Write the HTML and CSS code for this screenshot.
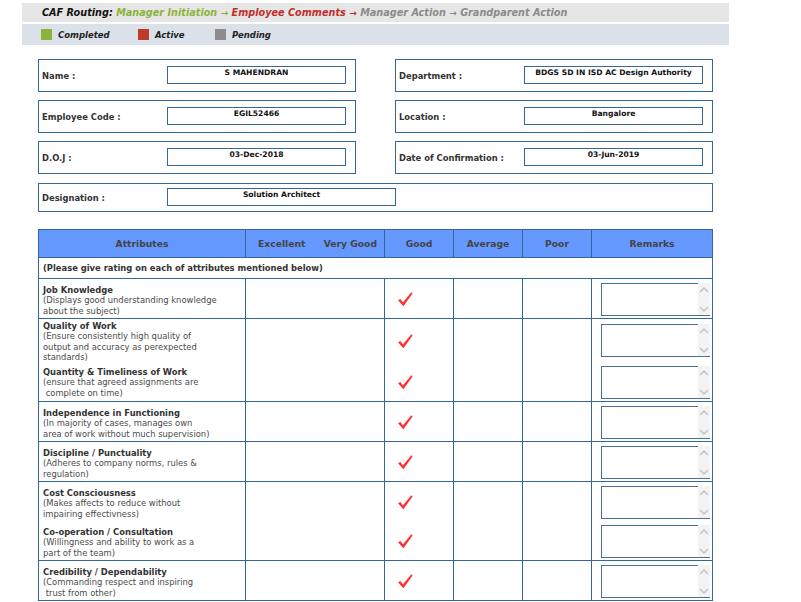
FILE: index.html
```html
<!DOCTYPE html>
<html>
<head>
<meta charset="utf-8">
<link rel="stylesheet" href="styles.css">
</head>
<body>
<div class="page">
  <div class="routing">
    <span class="caf">CAF Routing:</span>
    <span class="done">Manager Initiation <span class="arr">&#8594;</span></span>
    <span class="active">Employee Comments <span class="arr">&#8594;</span></span>
    <span class="pend">Manager Action <span class="arr">&#8594;</span></span>
    <span class="pend">Grandparent Action</span>
  </div>
  <div class="legend">
    <span class="sw sw-green"></span><span class="lg">Completed</span>
    <span class="sw sw-red"></span><span class="lg">Active</span>
    <span class="sw sw-grey"></span><span class="lg">Pending</span>
  </div>

  <div class="info">
    <div class="field"><span class="label">Name :</span><span class="value">S MAHENDRAN</span></div>
    <div class="field"><span class="label">Department :</span><span class="value">BDGS SD IN ISD AC Design Authority</span></div>
    <div class="field"><span class="label">Employee Code :</span><span class="value">EGIL52466</span></div>
    <div class="field"><span class="label">Location :</span><span class="value">Bangalore</span></div>
    <div class="field"><span class="label">D.O.J :</span><span class="value">03-Dec-2018</span></div>
    <div class="field"><span class="label">Date of Confirmation :</span><span class="value">03-Jun-2019</span></div>
    <div class="field wide"><span class="label">Designation :</span><span class="value">Solution Architect</span></div>
  </div>

  <table class="rating">
    <colgroup>
      <col class="c-attr"><col class="c-ev"><col class="c-r"><col class="c-r"><col class="c-r"><col class="c-rem">
    </colgroup>
    <thead>
      <tr>
        <th>Attributes</th>
        <th><div class="ev"><span>Excellent</span><span>Very Good</span></div></th>
        <th>Good</th>
        <th>Average</th>
        <th>Poor</th>
        <th>Remarks</th>
      </tr>
    </thead>
    <tbody>
      <tr><td colspan="6" class="note">(Please give rating on each of attributes mentioned below)</td></tr>

      <tr>
        <td><div class="attr"><b>Job Knowledge</b><span>(Displays good understanding knowledge</span><span>about the subject)</span></div></td>
        <td></td>
        <td><div class="slot"><svg class="tick" viewBox="0 0 16 16"><path d="M1,9.3 L3.3,7.9 L6,11.2 L14.3,1.2 L15.6,2.4 L6.4,15.3 Z"/></svg></div></td>
        <td></td><td></td>
        <td><div class="slot rem"><div class="remark"><textarea></textarea><div class="sb"><svg viewBox="0 0 10 6"><path d="M1 5 L5 1 L9 5"/></svg><svg viewBox="0 0 10 6"><path d="M1 1 L5 5 L9 1"/></svg></div></div></div></td>
      </tr>

      <tr>
        <td>
          <div class="attr first4"><b>Quality of Work</b><span>(Ensure consistently high quality of</span><span>output and accuracy as perexpected</span><span>standards)</span></div>
          <div class="attr second"><b>Quantity &amp; Timeliness of Work</b><span>(ensure that agreed assignments are</span><span>&nbsp;complete on time)</span></div>
        </td>
        <td></td>
        <td>
          <div class="slot tall"><svg class="tick" viewBox="0 0 16 16"><path d="M1,9.3 L3.3,7.9 L6,11.2 L14.3,1.2 L15.6,2.4 L6.4,15.3 Z"/></svg></div>
          <div class="slot"><svg class="tick" viewBox="0 0 16 16"><path d="M1,9.3 L3.3,7.9 L6,11.2 L14.3,1.2 L15.6,2.4 L6.4,15.3 Z"/></svg></div>
        </td>
        <td></td><td></td>
        <td>
          <div class="slot rem tall"><div class="remark"><textarea></textarea><div class="sb"><svg viewBox="0 0 10 6"><path d="M1 5 L5 1 L9 5"/></svg><svg viewBox="0 0 10 6"><path d="M1 1 L5 5 L9 1"/></svg></div></div></div>
          <div class="slot rem"><div class="remark"><textarea></textarea><div class="sb"><svg viewBox="0 0 10 6"><path d="M1 5 L5 1 L9 5"/></svg><svg viewBox="0 0 10 6"><path d="M1 1 L5 5 L9 1"/></svg></div></div></div>
        </td>
      </tr>

      <tr>
        <td><div class="attr"><b>Independence in Functioning</b><span>(In majority of cases, manages own</span><span>area of work without much supervision)</span></div></td>
        <td></td>
        <td><div class="slot"><svg class="tick" viewBox="0 0 16 16"><path d="M1,9.3 L3.3,7.9 L6,11.2 L14.3,1.2 L15.6,2.4 L6.4,15.3 Z"/></svg></div></td>
        <td></td><td></td>
        <td><div class="slot rem"><div class="remark"><textarea></textarea><div class="sb"><svg viewBox="0 0 10 6"><path d="M1 5 L5 1 L9 5"/></svg><svg viewBox="0 0 10 6"><path d="M1 1 L5 5 L9 1"/></svg></div></div></div></td>
      </tr>

      <tr>
        <td><div class="attr"><b>Discipline / Punctuality</b><span>(Adheres to company norms, rules &amp;</span><span>regulation)</span></div></td>
        <td></td>
        <td><div class="slot"><svg class="tick" viewBox="0 0 16 16"><path d="M1,9.3 L3.3,7.9 L6,11.2 L14.3,1.2 L15.6,2.4 L6.4,15.3 Z"/></svg></div></td>
        <td></td><td></td>
        <td><div class="slot rem"><div class="remark"><textarea></textarea><div class="sb"><svg viewBox="0 0 10 6"><path d="M1 5 L5 1 L9 5"/></svg><svg viewBox="0 0 10 6"><path d="M1 1 L5 5 L9 1"/></svg></div></div></div></td>
      </tr>

      <tr>
        <td>
          <div class="attr"><b>Cost Consciousness</b><span>(Makes affects to reduce without</span><span>impairing effectivness)</span></div>
          <div class="attr"><b>Co-operation / Consultation</b><span>(Willingness and ability to work as a</span><span>part of the team)</span></div>
        </td>
        <td></td>
        <td>
          <div class="slot"><svg class="tick" viewBox="0 0 16 16"><path d="M1,9.3 L3.3,7.9 L6,11.2 L14.3,1.2 L15.6,2.4 L6.4,15.3 Z"/></svg></div>
          <div class="slot"><svg class="tick" viewBox="0 0 16 16"><path d="M1,9.3 L3.3,7.9 L6,11.2 L14.3,1.2 L15.6,2.4 L6.4,15.3 Z"/></svg></div>
        </td>
        <td></td><td></td>
        <td>
          <div class="slot rem"><div class="remark"><textarea></textarea><div class="sb"><svg viewBox="0 0 10 6"><path d="M1 5 L5 1 L9 5"/></svg><svg viewBox="0 0 10 6"><path d="M1 1 L5 5 L9 1"/></svg></div></div></div>
          <div class="slot rem"><div class="remark"><textarea></textarea><div class="sb"><svg viewBox="0 0 10 6"><path d="M1 5 L5 1 L9 5"/></svg><svg viewBox="0 0 10 6"><path d="M1 1 L5 5 L9 1"/></svg></div></div></div>
        </td>
      </tr>

      <tr>
        <td><div class="attr"><b>Credibility / Dependability</b><span>(Commanding respect and inspiring</span><span>&nbsp;trust from other)</span></div></td>
        <td></td>
        <td><div class="slot"><svg class="tick" viewBox="0 0 16 16"><path d="M1,9.3 L3.3,7.9 L6,11.2 L14.3,1.2 L15.6,2.4 L6.4,15.3 Z"/></svg></div></td>
        <td></td><td></td>
        <td><div class="slot rem"><div class="remark"><textarea></textarea><div class="sb"><svg viewBox="0 0 10 6"><path d="M1 5 L5 1 L9 5"/></svg><svg viewBox="0 0 10 6"><path d="M1 1 L5 5 L9 1"/></svg></div></div></div></td>
      </tr>
    </tbody>
  </table>
</div>
</body>
</html>
```

FILE: styles.css
```css
html, body {
  margin: 0;
  padding: 0;
  background: #ffffff;
}
body {
  font-family: "DejaVu Sans", Verdana, sans-serif;
  color: #222;
}
.page {
  margin: 3px 0 0 22px;
  width: 707px;
}
.routing {
  height: 19px;
  line-height: 19px;
  background: #e6e6e6;
  padding-left: 20px;
  font-size: 9.7px;
  font-weight: bold;
  font-style: italic;
  white-space: nowrap;
}
.routing .caf { color: #111; }
.routing .done { color: #8db33a; }
.routing .active { color: #c0302b; }
.routing .pend { color: #8a8a8a; }
.routing .arr { font-size: 9px; }

.legend {
  margin-top: 2px;
  height: 21px;
  background: #dae1e9;
  padding-left: 19px;
  display: flex;
  align-items: center;
}
.sw {
  width: 11px;
  height: 11px;
  margin-right: 6px;
}
.sw-green { background: #8db33a; }
.sw-red { background: #c0392b; }
.sw-grey { background: #8c8c8c; }
.lg {
  font-size: 8.5px;
  font-weight: bold;
  font-style: italic;
  color: #222;
}
.lg:nth-of-type(2) { width: 80px; }
.lg:nth-of-type(4) { width: 60px; }

.info {
  margin: 14px 0 0 16px;
  width: 675px;
  display: grid;
  grid-template-columns: 318px 318px;
  column-gap: 39px;
  row-gap: 8px;
}
.field {
  box-sizing: border-box;
  height: 33px;
  border: 1px solid #336699;
  padding: 0 3px;
  display: flex;
  align-items: center;
}
.label {
  width: 125px;
  flex: none;
  font-size: 8.4px;
  font-weight: bold;
  color: #333;
  padding-top: 1px;
}
.value {
  box-sizing: border-box;
  align-self: flex-start;
  margin-top: 6px;
  width: 179px;
  height: 18px;
  border: 1px solid #336699;
  text-align: center;
  font-size: 7.6px;
  font-weight: bold;
  color: #111;
  line-height: 10px;
  padding-top: 1px;
  white-space: nowrap;
}
.field.wide {
  grid-column: 1 / span 2;
  height: 29px;
  margin-top: 1px;
}
.field.wide .value {
  width: 229px;
  margin-top: 4px;
}

.rating {
  margin: 17px 0 0 16px;
  width: 675px;
  table-layout: fixed;
  border-collapse: collapse;
  border: 1px solid #336699;
}
.c-attr { width: 207px; }
.c-ev { width: 139px; }
.c-r { width: 69px; }
.c-rem { width: 121px; }
.rating th, .rating td {
  border: 1px solid #336699;
  padding: 0;
  vertical-align: top;
}
.rating th {
  height: 27px;
  background: #6699ff;
  color: #444;
  font-size: 9.2px;
  font-weight: bold;
  vertical-align: middle;
  text-align: center;
}
.ev {
  display: flex;
  justify-content: space-between;
  padding: 0 7px 0 12px;
}
.rating td.note {
  height: 20px;
  vertical-align: middle;
  font-size: 8.4px;
  font-weight: bold;
  color: #333;
  padding-left: 4px;
}
.attr {
  height: 39px;
  box-sizing: border-box;
  padding: 6px 4px 0 4px;
  display: flex;
  flex-direction: column;
  font-size: 8.4px;
  line-height: 10.3px;
  color: #4a4a4a;
  white-space: nowrap;
}
.attr b {
  font-size: 8.4px;
  color: #333;
}
.attr.first4 {
  height: 43px;
  padding-top: 2px;
}
.attr.second {
  padding-top: 5px;
}

.slot {
  height: 39px;
  box-sizing: border-box;
  padding: 12px 0 0 12px;
}
.slot.tall { height: 43px; padding-top: 14px; }
.slot.rem { padding: 4px 0 0 9px; }
.slot.rem.tall { padding-top: 5px; }
.tick {
  display: block;
  width: 16px;
  height: 16px;
  fill: #ff3333;
}
.remark {
  box-sizing: border-box;
  width: 109px;
  height: 33px;
  border: 1px solid #4a7093;
  display: flex;
  background: #fff;
}
.remark textarea {
  flex: 1;
  min-width: 0;
  border: none;
  outline: none;
  resize: none;
  padding: 0;
  margin: 0;
  background: #fff;
}
.sb {
  width: 12px;
  background: #f3f3f3;
  display: flex;
  flex-direction: column;
  justify-content: space-between;
  align-items: center;
  padding: 4px 0 3px;
  margin-top: -1px;
  margin-right: -1px;
}
.sb svg {
  width: 10px;
  height: 6px;
  fill: none;
  stroke: #c4c4c4;
  stroke-width: 1.5;
}
```
